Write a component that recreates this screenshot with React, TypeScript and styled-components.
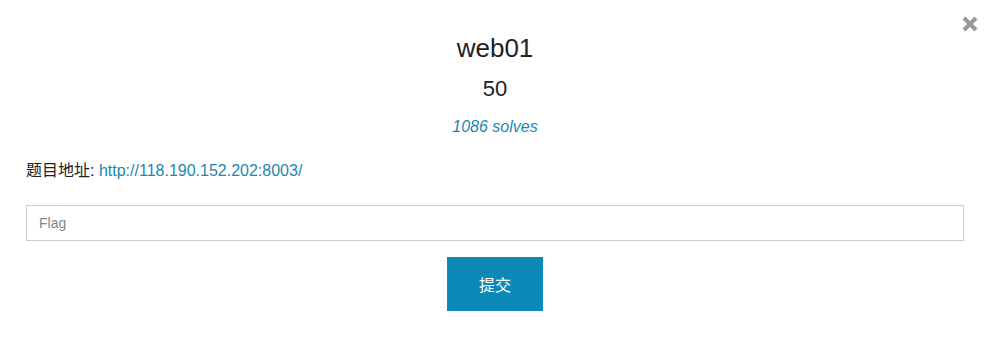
import React, { useState } from 'react';
import styled, { createGlobalStyle } from 'styled-components';

const GlobalStyle = createGlobalStyle`
  body {
    margin: 0;
    background: #fff;
    font-family: "Liberation Sans", "Noto Sans CJK SC", sans-serif;
    color: #222;
  }
`;

const Modal = styled.div`
  position: relative;
  width: 988px;
  height: 357px;
  box-sizing: border-box;
  padding: 33px 24px 0 26px;
  display: flex;
  flex-direction: column;
`;

const CloseButton = styled.button`
  position: absolute;
  top: 14px;
  right: 8px;
  width: 20px;
  height: 20px;
  padding: 0;
  border: none;
  background: transparent;
  cursor: pointer;
  display: flex;
  align-items: center;
  justify-content: center;
`;

const Title = styled.h2`
  margin: 0;
  text-align: center;
  font-size: 26px;
  font-weight: 400;
  line-height: 30px;
`;

const Points = styled.h3`
  margin: 13px 0 0;
  text-align: center;
  font-size: 22px;
  font-weight: 400;
  line-height: 26px;
`;

const Solves = styled.div`
  margin-top: 15px;
  text-align: center;
  font-size: 16px;
  font-style: italic;
  color: #1d87ae;
  line-height: 20px;
`;

const Description = styled.p`
  margin: 23px 0 0;
  font-size: 16px;
  line-height: 22px;
  color: #222;

  a {
    color: #1d87ae;
    text-decoration: none;
  }
`;

const FlagInput = styled.input`
  margin-top: 23px;
  height: 36px;
  box-sizing: border-box;
  width: 100%;
  border: 1px solid #ccc;
  padding: 0 12px;
  font-family: inherit;
  font-size: 14px;
  color: #333;
  outline: none;

  &::placeholder {
    color: #888;
  }
`;

const SubmitRow = styled.div`
  display: flex;
  justify-content: center;
  margin-top: 16px;
`;

const SubmitButton = styled.button`
  width: 96px;
  height: 54px;
  border: none;
  background: #0b89b7;
  color: #fff;
  font-family: inherit;
  font-size: 16px;
  cursor: pointer;
`;

const App = (): React.ReactElement => {
  const [flag, setFlag] = useState<string>('');

  return (
    <>
      <GlobalStyle />
      <Modal>
        <CloseButton aria-label="close">
          <svg width="18" height="18" viewBox="0 0 18 18">
            <path d="M3 3 L15 15 M15 3 L3 15" stroke="#9a9a9a" strokeWidth="4" strokeLinecap="butt" />
          </svg>
        </CloseButton>
        <Title>web01</Title>
        <Points>50</Points>
        <Solves>1086 solves</Solves>
        <Description>
          题目地址: <a href="#">http://118.190.152.202:8003/</a>
        </Description>
        <FlagInput
          placeholder="Flag"
          value={flag}
          onChange={(e) => setFlag(e.target.value)}
        />
        <SubmitRow>
          <SubmitButton>提交</SubmitButton>
        </SubmitRow>
      </Modal>
    </>
  );
};

export default App;
